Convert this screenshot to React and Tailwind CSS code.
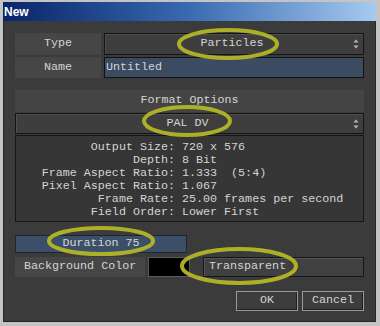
import React from "react";

const mono = "font-['Liberation_Mono','DejaVu_Sans_Mono',monospace]";

function Spinner() {
  return (
    <svg width="6" height="10" viewBox="0 0 6 10" className="absolute right-[4px] top-1/2 -translate-y-1/2">
      <path d="M3 0.5 L5.5 3.5 L0.5 3.5 Z" fill="#b8b8b8" />
      <path d="M3 9.5 L5.5 6.5 L0.5 6.5 Z" fill="#b8b8b8" />
    </svg>
  );
}

function Combo({ children, h }) {
  return (
    <div
      className={`relative flex-1 ${h} flex items-center justify-center bg-[#3e3e3e] border border-[#141414] shadow-[inset_1px_1px_0_#4e4e4e]`}
    >
      <span className="pr-[4px]">{children}</span>
      <Spinner />
    </div>
  );
}

const info = [
  ["Output Size:", "720 x 576"],
  ["Depth:", "8 Bit"],
  ["Frame Aspect Ratio:", "1.333  (5:4)"],
  ["Pixel Aspect Ratio:", "1.067"],
  ["Frame Rate:", "25.00 frames per second"],
  ["Field Order:", "Lower First"],
];

export default function App() {
  return (
    <div className="relative w-[380px] h-[326px] bg-[#c4c4c4] pt-[2px] pl-[3px] pr-[4px] pb-[4px] flex flex-col overflow-hidden">
      <div className="h-[19px] shrink-0 bg-linear-to-r from-[#0a246a] via-[#3a6ab0] to-[#a6caf0] flex items-center pl-[1px]">
        <span className="font-['Liberation_Sans',Arial,sans-serif] font-bold text-[12px] text-white leading-none">
          New
        </span>
      </div>

      <div className={`flex-1 bg-[#3b3b3b] border-l border-r border-b border-[#262626] pl-[11px] pr-[11px] pt-[12px] flex flex-col text-[#d4d4d4] text-[11.7px] leading-none ${mono}`}>
        {/* Type */}
        <div className="flex gap-[3px] h-[22px]">
          <div className="w-[86px] bg-[#464646] flex items-center justify-center">Type</div>
          <Combo h="h-[22px]">Particles</Combo>
        </div>
        {/* Name */}
        <div className="flex gap-[3px] h-[21px] mt-[2px]">
          <div className="w-[86px] bg-[#464646] flex items-center justify-center">Name</div>
          <div className="flex-1 bg-[#3b4b62] border border-[#121212] flex items-center pl-[1px]">
            Untitled
          </div>
        </div>

        {/* Format options */}
        <div className="mt-[12px] h-[22px] bg-[#444444] flex items-center justify-center">
          Format Options
        </div>
        <div className="mt-[1px] flex h-[21px]">
          <Combo h="h-[21px]">PAL DV</Combo>
        </div>
        <div className="mt-[1px] h-[87px] bg-[#363636] border border-[#161616] pt-[5px] whitespace-pre">
          {info.map(([k, v]) => (
            <div key={k} className="flex h-[13px] items-center">
              <span className="w-[159px] text-right">{k}</span>
              <span className="pl-[7px]">{v}</span>
            </div>
          ))}
        </div>

        {/* Duration */}
        <div className="mt-[13px] w-[172px] h-[18px] bg-[#3c4f68] border border-[#1c2634] flex items-center justify-center">
          Duration 75
        </div>

        {/* Background color */}
        <div className="mt-[4px] flex h-[20px]">
          <div className="w-[130px] bg-[#464646] flex items-center pl-[9px]">Background Color</div>
          <div className="ml-[3px] w-[42px] bg-black border border-[#5a5a5a]" />
          <div className="ml-[13px] flex-1 bg-[#404040] border border-[#161616] shadow-[inset_1px_1px_0_#555] flex items-center pl-[5px]">
            Transparent
          </div>
        </div>

        {/* Buttons */}
        <div className="mt-[14px] flex justify-end gap-[4px]">
          <div className="w-[62px] h-[20px] bg-[#3d3d3d] border border-[#9a9a9a] shadow-[inset_-1px_-1px_0_#1e1e1e] flex items-center justify-center">
            OK
          </div>
          <div className="w-[62px] h-[20px] bg-[#3d3d3d] border border-[#9a9a9a] shadow-[inset_-1px_-1px_0_#1e1e1e] flex items-center justify-center">
            Cancel
          </div>
        </div>
      </div>

      <svg className="absolute inset-0 pointer-events-none" width="380" height="326">
        <g fill="none" stroke="#b4b628" strokeWidth="4" opacity="0.95">
          <ellipse cx="228" cy="44" rx="49" ry="14" />
          <ellipse cx="187" cy="121" rx="43" ry="14" />
          <ellipse cx="101" cy="241" rx="52" ry="13" />
          <ellipse cx="239" cy="266" rx="57" ry="17" />
        </g>
      </svg>
    </div>
  );
}
